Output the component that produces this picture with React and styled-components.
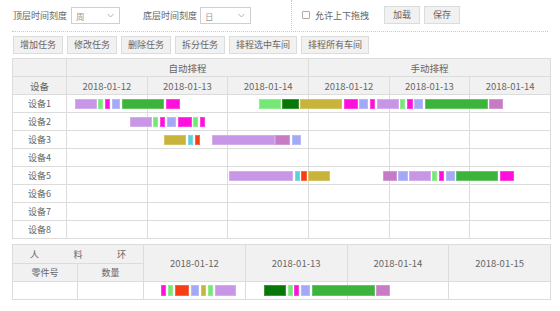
import React from "react";
import styled, { createGlobalStyle } from "styled-components";

const GlobalStyle = createGlobalStyle`
  * { box-sizing: border-box; }
  body {
    margin: 0;
    background: #fff;
    font-family: "Noto Sans CJK SC", "Noto Sans", sans-serif;
    color: #666;
  }
`;

const Page = styled.div`
  width: 560px;
  padding: 0 9px 0 12px;
  font-size: 9px;
`;

const TopBar = styled.div`
  display: flex;
  align-items: stretch;
  height: 32px;
  margin-right: 3px;
  border-bottom: 1px dotted #c8c8c8;
`;

const Field = styled.div`
  display: flex;
  align-items: center;
  margin-left: ${(p) => p.$ml || 0}px;
`;

const Label = styled.span`
  color: #666;
  margin-right: ${(p) => p.$mr ?? 4}px;
  white-space: nowrap;
`;

const FakeSelect = styled.div`
  width: ${(p) => p.$w}px;
  height: 17px;
  border: 1px solid #cfcfcf;
  background: #fff;
  display: flex;
  align-items: center;
  justify-content: space-between;
  padding: 0 5px 0 4px;
  color: #999;
  font-size: 8.5px;
`;

const RightGroup = styled.div`
  display: flex;
  align-items: center;
  margin-left: 40px;
  padding-left: 10px;
  border-left: 1px dotted #c8c8c8;
  height: 30px;
`;

const Check = styled.span`
  width: 8px;
  height: 8px;
  border: 1px solid #aaa;
  border-radius: 1px;
  background: #fff;
  margin-right: 5px;
`;

const Button = styled.button`
  height: 18px;
  padding: 0 ${(p) => p.$px || 6}px;
  margin-left: ${(p) => p.$ml || 0}px;
  border: 1px solid #dcdcdc;
  background: #f1f1f1;
  color: #666;
  font-family: inherit;
  font-size: 9px;
  line-height: 16px;
  white-space: nowrap;
  cursor: pointer;
`;

const ActionBar = styled.div`
  display: flex;
  gap: 4px;
  padding: 4px 0 0 1px;
  height: 26px;
`;

const Gantt = styled.div`
  border-top: 1px solid #dcdcdc;
  border-left: 1px solid #dcdcdc;
  font-size: 9.5px;
`;

const HeadRow = styled.div`
  display: grid;
  grid-template-columns: 54px repeat(6, 1fr);
  height: 18px;
  background: #f1f1f1;
`;

const HeadCell = styled.div`
  grid-column: span ${(p) => p.$span || 1};
  display: flex;
  align-items: center;
  justify-content: center;
  border-right: 1px solid #dcdcdc;
  border-bottom: 1px solid #dcdcdc;
  white-space: nowrap;
  color: #666;
`;

const Row = styled.div`
  display: grid;
  grid-template-columns: 54px 1fr;
  height: 18px;
`;

const RowLabel = styled.div`
  display: flex;
  align-items: center;
  justify-content: center;
  border-right: 1px solid #dcdcdc;
  border-bottom: 1px solid #dcdcdc;
  font-size: 9px;
`;

const Timeline = styled.div`
  position: relative;
  display: grid;
  grid-template-columns: repeat(${(p) => p.$cols}, 1fr);
`;

const DayCell = styled.div`
  border-right: 1px solid #dcdcdc;
  border-bottom: 1px solid #dcdcdc;
`;

const Bar = styled.div`
  position: absolute;
  top: ${(p) => p.$top || 4}px;
  height: ${(p) => p.$h || 10}px;
  background: ${(p) => p.$c};
  box-shadow: inset 0 0 0 1px rgba(255, 255, 255, 0.22);
`;

const Bottom = styled.div`
  margin-top: 5px;
  border-top: 1px solid #dcdcdc;
  border-left: 1px solid #dcdcdc;
  display: grid;
  grid-template-columns: 65px 66px 1fr;
  grid-template-rows: 19px 18px 18px;
  font-size: 9.5px;
`;

const BCell = styled.div`
  grid-column: ${(p) => p.$col || "auto"};
  grid-row: ${(p) => p.$row || "auto"};
  display: flex;
  align-items: center;
  justify-content: ${(p) => p.$justify || "center"};
  padding: ${(p) => p.$pad || 0};
  background: ${(p) => (p.$head ? "#f1f1f1" : "#fff")};
  border-right: 1px solid #dcdcdc;
  border-bottom: 1px solid #dcdcdc;
  font-size: 9px;
`;

const DateHeads = styled.div`
  grid-column: 3;
  grid-row: 1 / 3;
  display: grid;
  grid-template-columns: repeat(4, 1fr);
  background: #f1f1f1;
`;

const DateHead = styled(DayCell)`
  display: flex;
  align-items: center;
  justify-content: center;
  white-space: nowrap;
`;

const BottomTimeline = styled(Timeline)`
  grid-column: 3;
  grid-row: 3;
`;

const Chevron = () => (
  <svg width="7" height="5" viewBox="0 0 7 5">
    <path d="M0.5 1 L3.5 4 L6.5 1" fill="none" stroke="#aaa" strokeWidth="0.9" />
  </svg>
);

const P = "#c896e6";
const LG = "#74e874";
const M = "#ff0fdc";
const L = "#a3a8f7";
const G = "#3cb43c";
const DG = "#077707";
const O = "#c8b43a";
const OR = "#c77bc4";
const T = "#5ccfda";
const R = "#f73d12";

const devices = [
  [
    [75, 97, P], [98, 103, LG], [105, 110, M], [112, 120, L], [122, 164, G], [166, 180, M],
    [259, 281, LG], [282, 299, DG], [300, 342, O], [344, 358, M], [359, 368, L], [370, 375, M],
    [377, 399, P], [400, 405, LG], [407, 413, M], [414, 423, L], [425, 488, G], [489, 503, OR],
  ],
  [[130, 152, P], [153, 158, LG], [160, 165, M], [167, 176, L], [178, 192, M], [193, 198, LG], [200, 205, M]],
  [[164, 186, O], [188, 193, T], [195, 200, R], [212, 275, P], [275, 290, OR], [292, 301, L]],
  [],
  [
    [229, 293, P], [295, 300, T], [301, 307, R], [308, 330, O], [383, 397, OR], [398, 408, L],
    [409, 431, P], [432, 437, LG], [439, 444, M], [446, 455, L], [456, 498, G], [500, 514, M],
  ],
  [],
  [],
  [],
];

const bottomBars = [
  [160, 165, M], [167, 172, LG], [174, 188, R], [190, 198, L], [200, 205, O], [207, 212, LG],
  [214, 235, P], [263, 285, DG], [287, 292, LG], [293, 298, M], [300, 309, L], [311, 374, G],
  [375, 389, OR],
];

const days = ["2018-01-12", "2018-01-13", "2018-01-14"];
const bottomDays = ["2018-01-12", "2018-01-13", "2018-01-14", "2018-01-15"];

const Bars = ({ items, origin, top, h }) =>
  items.map(([a, b, c], i) => (
    <Bar key={i} $c={c} $top={top} $h={h} style={{ left: a - origin, width: b - a }} />
  ));

export default function App() {
  return (
    <Page>
      <GlobalStyle />
      <TopBar>
        <Field $ml={1}>
          <Label>顶层时间刻度</Label>
          <FakeSelect $w={49}>
            <span>周</span>
            <Chevron />
          </FakeSelect>
        </Field>
        <Field $ml={23}>
          <Label $mr={3}>底层时间刻度</Label>
          <FakeSelect $w={51}>
            <span>日</span>
            <Chevron />
          </FakeSelect>
        </Field>
        <RightGroup>
          <Check />
          <Label $mr={0}>允许上下拖拽</Label>
          <Button $ml={15} $px={8}>加载</Button>
          <Button $ml={4} $px={8}>保存</Button>
        </RightGroup>
      </TopBar>
      <ActionBar>
        <Button>增加任务</Button>
        <Button>修改任务</Button>
        <Button>删除任务</Button>
        <Button>拆分任务</Button>
        <Button>排程选中车间</Button>
        <Button>排程所有车间</Button>
      </ActionBar>
      <Gantt>
        <HeadRow>
          <HeadCell />
          <HeadCell $span={3}>自动排程</HeadCell>
          <HeadCell $span={3}>手动排程</HeadCell>
        </HeadRow>
        <HeadRow>
          <HeadCell>设备</HeadCell>
          {[...days, ...days].map((d, i) => (
            <HeadCell key={i}>{d}</HeadCell>
          ))}
        </HeadRow>
        {devices.map((bars, i) => (
          <Row key={i}>
            <RowLabel>设备{i + 1}</RowLabel>
            <Timeline $cols={6}>
              {Array.from({ length: 6 }, (_, j) => (
                <DayCell key={j} />
              ))}
              <Bars items={bars} origin={67} />
            </Timeline>
          </Row>
        ))}
      </Gantt>
      <Bottom>
        <BCell $head $col="1 / 3" $row="1" $justify="space-between" $pad="0 17px 0 17px">
          <span>人</span>
          <span>料</span>
          <span>环</span>
        </BCell>
        <DateHeads>
          {bottomDays.map((d) => (
            <DateHead key={d}>{d}</DateHead>
          ))}
        </DateHeads>
        <BCell $head $col="1" $row="2">零件号</BCell>
        <BCell $head $col="2" $row="2">数量</BCell>
        <BCell $col="1" $row="3" />
        <BCell $col="2" $row="3" />
        <BottomTimeline $cols={4}>
          {bottomDays.map((d) => (
            <DayCell key={d} />
          ))}
          <Bars items={bottomBars} origin={143} top={3} h={11} />
        </BottomTimeline>
      </Bottom>
    </Page>
  );
}
